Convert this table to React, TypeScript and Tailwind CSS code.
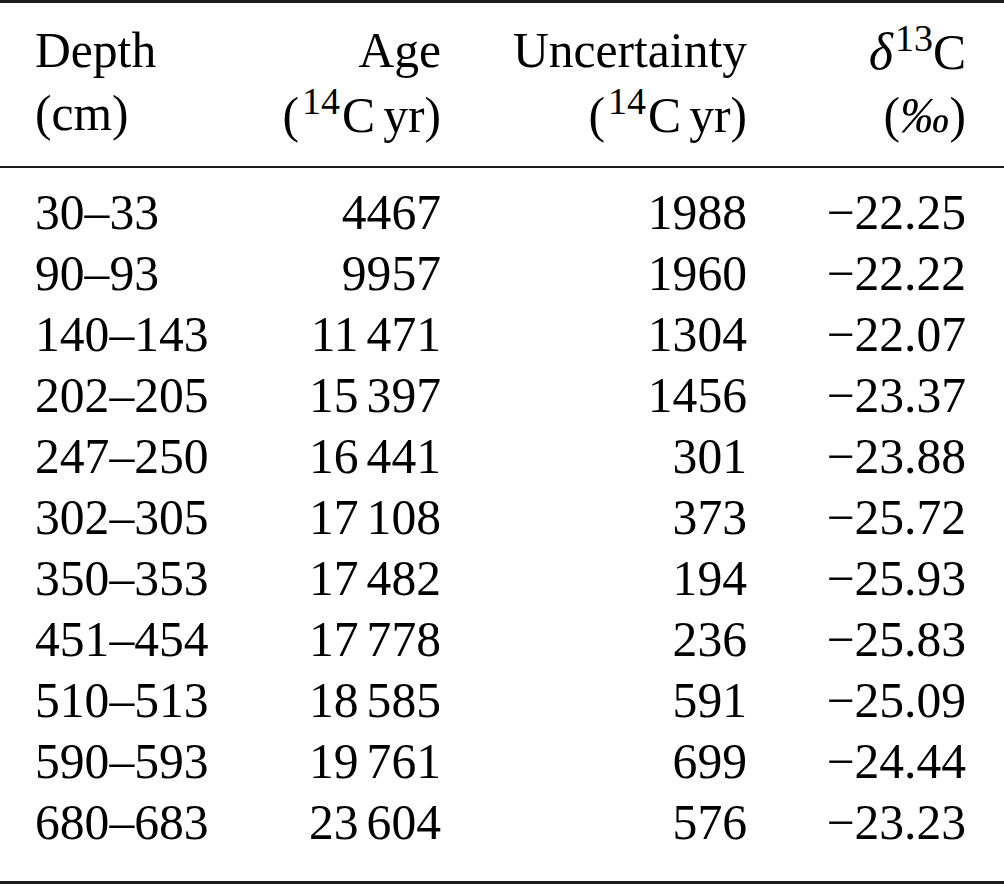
import React from "react";

const rows: [string, string, string, string][] = [
  ["30–33", "4467", "1988", "−22.25"],
  ["90–93", "9957", "1960", "−22.22"],
  ["140–143", "11 471", "1304", "−22.07"],
  ["202–205", "15 397", "1456", "−23.37"],
  ["247–250", "16 441", "301", "−23.88"],
  ["302–305", "17 108", "373", "−25.72"],
  ["350–353", "17 482", "194", "−25.93"],
  ["451–454", "17 778", "236", "−25.83"],
  ["510–513", "18 585", "591", "−25.09"],
  ["590–593", "19 761", "699", "−24.44"],
  ["680–683", "23 604", "576", "−23.23"],
];

function Grouped({ v }: { v: string }) {
  const parts = v.split(" ");
  if (parts.length === 1) return <>{v}</>;
  return (
    <>
      {parts[0]}
      <span className="inline-block w-[8px]" />
      {parts[1]}
    </>
  );
}

function Sup({ children, className = "" }: { children: React.ReactNode; className?: string }) {
  return <span className={`text-[38px] leading-none align-[18px] ${className}`}>{children}</span>;
}

function CYr() {
  return (
    <>
      (<Sup className="ml-[3px] mr-[2px]">14</Sup>C<span className="inline-block w-[8px]" />yr)
    </>
  );
}

const grid = "grid grid-cols-[238px_168px_306px_219px]";

export default function App() {
  return (
    <div
      className="w-[1004px] h-[884px] bg-white text-black flex flex-col pl-[35px] pr-[38px] text-[49.6px]"
      style={{ fontFamily: '"Liberation Serif", "Times New Roman", serif' }}
    >
      <div className="h-[3px] bg-[#1c1c1c] -ml-[35px] -mr-[38px]" />
      <div className={`${grid} pt-[16px] leading-[63px]`}>
        <div className="text-left">
          <div>Depth</div>
          <div>(cm)</div>
        </div>
        <div className="text-right">
          <div>Age</div>
          <div>
            <CYr />
          </div>
        </div>
        <div className="text-right">
          <div>Uncertainty</div>
          <div>
            <CYr />
          </div>
        </div>
        <div className="text-right">
          <div>
            <span className="italic text-[52px]">δ</span>
            <Sup className="ml-[2px]">13</Sup>C
          </div>
          <div>
            (<span className="italic">‰</span>)
          </div>
        </div>
      </div>
      <div className="h-[2px] bg-[#1c1c1c] mt-[19px] -ml-[35px] -mr-[38px]" />
      <div className="pt-[13.5px] leading-[61.1px]">
        {rows.map((r, i) => (
          <div key={i} className={grid}>
            <div className="text-left">{r[0]}</div>
            <div className="text-right">
              <Grouped v={r[1]} />
            </div>
            <div className="text-right">{r[2]}</div>
            <div className="text-right">{r[3]}</div>
          </div>
        ))}
      </div>
      <div className="flex-1" />
      <div className="h-[3px] bg-[#1c1c1c] -ml-[35px] -mr-[38px]" />
    </div>
  );
}
